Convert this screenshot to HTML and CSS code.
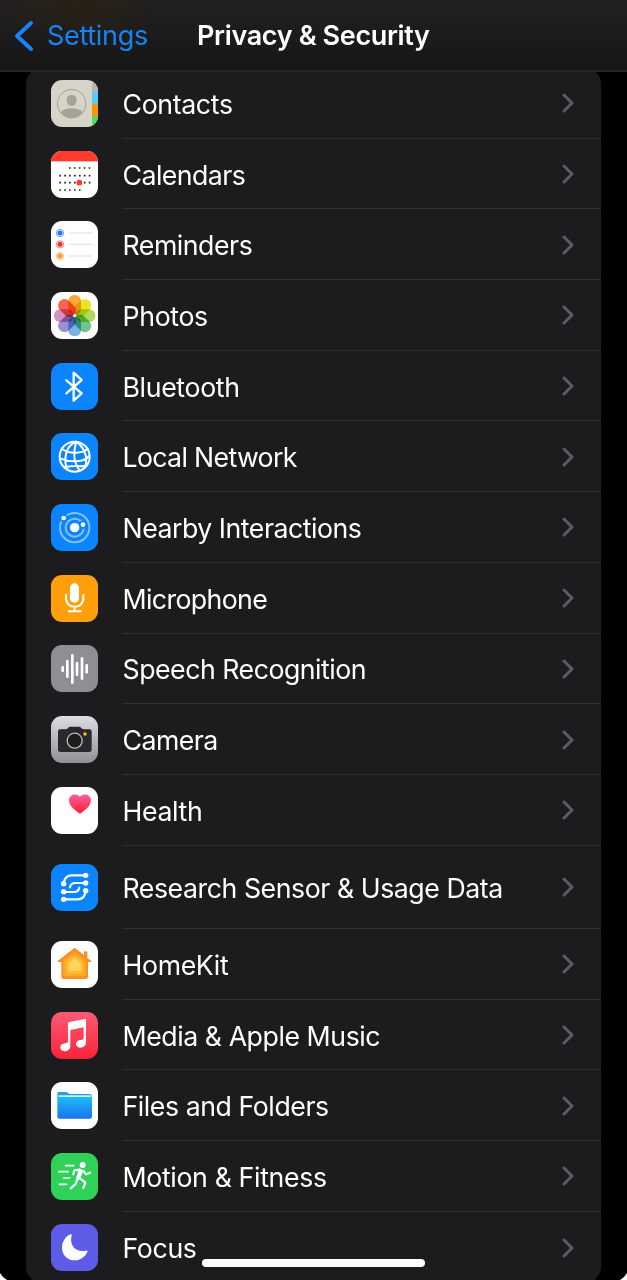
FILE: index.html
```html
<!DOCTYPE html>
<html lang="en">
<head>
<meta charset="utf-8">
<title>Privacy &amp; Security</title>
<link rel="stylesheet" href="styles.css">
</head>
<body>
<div class="screen">
<header class="nav">
  <a class="back"><svg class="back-icon" viewBox="0 0 20 32"><path d="M17 3 3 16 17 29"/></svg><span>Settings</span></a>
  <h1 class="title">Privacy &amp; Security</h1>
</header>
<main class="card">
  <div class="row">
    <svg class="icon" viewBox="0 0 141 141"><rect width="141" height="141" fill="#d6d3c8"/><path fill="#b9b5a9" d="M123 0h18v36h-18z"/><path fill="#5ac8fa" d="M123 36h18v36h-18z"/><path fill="#ff9500" d="M123 72h18v36h-18z"/><path fill="#4cd964" d="M123 108h18v33h-18z"/><circle cx="62" cy="71" r="43" fill="none" stroke="#a7a198" stroke-width="3"/><ellipse cx="62" cy="61" rx="15" ry="17" fill="#a7a198"/><path d="M29 97Q40 85 62 85T95 97Q82 114 62 114T29 97Z" fill="#a7a198"/></svg>
    <div class="cell"><span class="label w-contacts">Contacts</span><svg class="chev" viewBox="0 0 12 20"><path d="m2 2 8 8-8 8"/></svg></div>
  </div>
  <div class="row">
    <svg class="icon" viewBox="0 0 141 141"><rect width="141" height="141" fill="#fff"/><rect width="141" height="31" fill="#ff3b30"/><g stroke="#222" stroke-width="5" stroke-dasharray="5 9.7"><path d="M54 51h65M25 74h94M25 95h94M25 117h66"/></g><circle cx="85" cy="95" r="8.500" fill="#ff3b30"/></svg>
    <div class="cell"><span class="label w-calendars">Calendars</span><svg class="chev" viewBox="0 0 12 20"><path d="m2 2 8 8-8 8"/></svg></div>
  </div>
  <div class="row">
    <svg class="icon" viewBox="0 0 141 141"><rect width="141" height="141" fill="#fff"/><path stroke="#d9d9dc" stroke-width="2.500" d="M53 36h71M53 70h71M53 105h71"/><g fill="none" stroke-width="2"><circle cx="27" cy="36" r="11" stroke="#2e7bf6"/><circle cx="27" cy="70" r="11" stroke="#f33b35"/><circle cx="27" cy="105" r="11" stroke="#ff9f2d"/></g><circle cx="27" cy="36" r="7.500" fill="#2e6ff0"/><circle cx="27" cy="70" r="7.500" fill="#ed3030"/><circle cx="27" cy="105" r="7.500" fill="#fb9738"/></svg>
    <div class="cell"><span class="label w-reminders">Reminders</span><svg class="chev" viewBox="0 0 12 20"><path d="m2 2 8 8-8 8"/></svg></div>
  </div>
  <div class="row">
    <svg class="icon" viewBox="0 0 141 141"><rect width="141" height="141" fill="#fff"/><g class="petals" transform="translate(71 71)"><rect x="-19" y="-62" width="38" height="59" rx="18" fill="#fba53a"/><rect x="-19" y="-62" width="38" height="59" rx="18" fill="#ece526" transform="rotate(45)"/><rect x="-19" y="-62" width="38" height="59" rx="18" fill="#b0da58" transform="rotate(90)"/><rect x="-19" y="-62" width="38" height="59" rx="18" fill="#70c48f" transform="rotate(135)"/><rect x="-19" y="-62" width="38" height="59" rx="18" fill="#76b3e4" transform="rotate(180)"/><rect x="-19" y="-62" width="38" height="59" rx="18" fill="#9a91d0" transform="rotate(225)"/><rect x="-19" y="-62" width="38" height="59" rx="18" fill="#d293c1" transform="rotate(270)"/><rect x="-19" y="-62" width="38" height="59" rx="18" fill="#f66452" transform="rotate(315)"/></g><circle cx="71" cy="71" r="4" fill="#fff"/></svg>
    <div class="cell"><span class="label w-photos">Photos</span><svg class="chev" viewBox="0 0 12 20"><path d="m2 2 8 8-8 8"/></svg></div>
  </div>
  <div class="row">
    <svg class="icon" viewBox="0 0 141 141"><rect width="141" height="141" fill="#0a84ff"/><path class="line" stroke-width="7" d="m46 52 46 39-24 22V29l24 22-46 40"/></svg>
    <div class="cell"><span class="label w-bluetooth">Bluetooth</span><svg class="chev" viewBox="0 0 12 20"><path d="m2 2 8 8-8 8"/></svg></div>
  </div>
  <div class="row">
    <svg class="icon" viewBox="0 0 141 141"><rect width="141" height="141" fill="#0a84ff"/><g class="line" stroke-width="6"><circle cx="71" cy="71" r="45"/><path d="M76 26Q51 36 45 63T50 110M76 26Q66 60 72 83T88 112M76 26Q98 42 104 67T97 107M33 48Q53 61 77 59T110 47M27 76Q50 86 77 85T115 68M39 103Q65 98 80 99T105 99"/></g></svg>
    <div class="cell"><span class="label w-network">Local Network</span><svg class="chev" viewBox="0 0 12 20"><path d="m2 2 8 8-8 8"/></svg></div>
  </div>
  <div class="row">
    <svg class="icon" viewBox="0 0 141 141"><rect width="141" height="141" fill="#0a84ff"/><g fill="none" stroke="#84c1ff" stroke-width="6"><circle cx="71" cy="71" r="44"/><circle cx="71" cy="71" r="27"/></g><g fill="#fff" stroke="#0a84ff" stroke-width="5"><circle cx="38" cy="42" r="9.500"/><circle cx="96" cy="62" r="9.500"/></g><circle cx="71" cy="71" r="14" fill="#fff"/></svg>
    <div class="cell"><span class="label w-nearby">Nearby Interactions</span><svg class="chev" viewBox="0 0 12 20"><path d="m2 2 8 8-8 8"/></svg></div>
  </div>
  <div class="row">
    <svg class="icon" viewBox="0 0 141 141"><rect width="141" height="141" fill="#ff9f0a"/><rect x="57" y="25" width="27" height="58" rx="13.500" fill="#fff"/><path class="line" stroke-width="6" d="M45 60v10c0 34 52 34 52 0V60M71 96v12M53 109h36"/></svg>
    <div class="cell"><span class="label w-microphone">Microphone</span><svg class="chev" viewBox="0 0 12 20"><path d="m2 2 8 8-8 8"/></svg></div>
  </div>
  <div class="row">
    <svg class="icon" viewBox="0 0 141 141"><rect width="141" height="141" fill="#8e8e93"/><path class="line" stroke-width="8" d="M35 66v12M49 48v47M64 31v82M78 54v35M93 40v61M107 61v21"/></svg>
    <div class="cell"><span class="label w-speech">Speech Recognition</span><svg class="chev" viewBox="0 0 12 20"><path d="m2 2 8 8-8 8"/></svg></div>
  </div>
  <div class="row">
    <svg class="icon" viewBox="0 0 141 141"><defs><linearGradient id="camera" x2="0" y2="1"><stop stop-color="#dedde3"/><stop offset="1" stop-color="#8f8f95"/></linearGradient></defs><rect width="141" height="141" fill="url(#camera)"/><path fill="#29292c" d="M27 40h16q5 0 8-4t8-4h24q5 0 8 4t8 4h17q6 0 6 7v54q0 7-7 7H28q-7 0-7-7V47q0-7 6-7Z"/><circle cx="71" cy="74" r="22.500" fill="#1d1d1f" stroke="#b7b7bb" stroke-width="4"/><circle cx="102" cy="54" r="5" fill="#ffcc00"/></svg>
    <div class="cell"><span class="label w-camera">Camera</span><svg class="chev" viewBox="0 0 12 20"><path d="m2 2 8 8-8 8"/></svg></div>
  </div>
  <div class="row">
    <svg class="icon" viewBox="0 0 141 141"><defs><linearGradient id="heart" x2="0" y2="1"><stop stop-color="#ff5fa2"/><stop offset="1" stop-color="#fb202c"/></linearGradient></defs><rect width="141" height="141" fill="#fff"/><path fill="url(#heart)" d="M87 80C73 71 54 57 54 40 54 21 78 17 87 29 96 17 120 21 120 40 120 57 101 71 87 80Z"/></svg>
    <div class="cell"><span class="label w-health">Health</span><svg class="chev" viewBox="0 0 12 20"><path d="m2 2 8 8-8 8"/></svg></div>
  </div>
  <div class="row row-tall">
    <svg class="icon" viewBox="0 0 141 141"><rect width="141" height="141" fill="#0a84ff"/><path class="line" stroke-width="6.500" d="M38 59q3-24 22-25h44M104 57H73q-14 0-16 13M38 84h31q14 0 16-13M104 81q-3 24-22 25H38"/><g fill="#fff"><circle cx="104" cy="34" r="8"/><circle cx="104" cy="57" r="8"/><circle cx="104" cy="80" r="8"/><circle cx="38" cy="59" r="8"/><circle cx="38" cy="83" r="8"/><circle cx="38" cy="106" r="8"/></g></svg>
    <div class="cell"><span class="label w-research">Research Sensor &amp; Usage Data</span><svg class="chev" viewBox="0 0 12 20"><path d="m2 2 8 8-8 8"/></svg></div>
  </div>
  <div class="row">
    <svg class="icon" viewBox="0 0 141 141"><rect width="141" height="141" fill="#fff"/><path fill="#f8902a" d="m71 20 28 22V34q0-3 3-3h4q3 0 3 3v17l12 9q2 3-2 3h-8v44q0 7-6 7H37q-6 0-6-7V63h-9q-4 0-2-3Z"/><path fill="#ffa820" d="m71 32 34 27v42q0 5-5 5H42q-5 0-5-5V59Z"/><path fill="#ffbb38" d="m71 42 26 20v32q0 4-4 4H49q-4 0-4-4V62Z"/><path fill="#ffd45c" d="m71 51 18 14v21q0 3-3 3H56q-3 0-3-3V65Z"/></svg>
    <div class="cell"><span class="label w-homekit">HomeKit</span><svg class="chev" viewBox="0 0 12 20"><path d="m2 2 8 8-8 8"/></svg></div>
  </div>
  <div class="row">
    <svg class="icon" viewBox="0 0 141 141"><defs><linearGradient id="music" x2="0" y2="1"><stop stop-color="#fb5c74"/><stop offset="1" stop-color="#fa233b"/></linearGradient></defs><rect width="141" height="141" fill="url(#music)"/><path fill="#fff" d="M51 35q0-4 5-5l45-9q4-1 4 3v67c0 20-28 21-30 6 0-11 10-13 18-14 4-1 5-3 5-6V46l-40 8v48c0 19-29 21-30 5 0-10 9-13 17-14 5-1 6-3 6-7Z"/></svg>
    <div class="cell"><span class="label w-media">Media &amp; Apple Music</span><svg class="chev" viewBox="0 0 12 20"><path d="m2 2 8 8-8 8"/></svg></div>
  </div>
  <div class="row">
    <svg class="icon" viewBox="0 0 141 141"><defs><linearGradient id="folder" x2="0" y2="1"><stop stop-color="#1ebcf5"/><stop offset="1" stop-color="#1a73f0"/></linearGradient></defs><rect width="141" height="141" fill="#fff"/><path fill="#1ba2e9" d="M19 35q0-5 5-5h20q4 0 7 3t7 3h59q5 0 5 5v10H19Z"/><path fill="#c8f0ff" d="M22 40h98v5H22z"/><path fill="url(#folder)" d="M19 45h104v59q0 6-6 6H25q-6 0-6-6Z"/></svg>
    <div class="cell"><span class="label w-files">Files and Folders</span><svg class="chev" viewBox="0 0 12 20"><path d="m2 2 8 8-8 8"/></svg></div>
  </div>
  <div class="row">
    <svg class="icon" viewBox="0 0 141 141"><rect width="141" height="141" fill="#30d158"/><circle cx="95" cy="36" r="9" fill="#fff"/><path class="line" stroke-width="5" d="M44 38h24M24 56h27M38 75h18M25 94h22"/><path class="line" stroke-width="6.500" d="M67 64 70 52 86 50M97 54l8 10 12-5M88 77l15 12-6 16M79 79l-5 14-15 13"/><path class="line" stroke-width="13" d="M89 55 82 74"/></svg>
    <div class="cell"><span class="label w-motion">Motion &amp; Fitness</span><svg class="chev" viewBox="0 0 12 20"><path d="m2 2 8 8-8 8"/></svg></div>
  </div>
  <div class="row">
    <svg class="icon" viewBox="0 0 141 141"><rect width="141" height="141" fill="#5e5ce6"/><path fill="#fff" d="M58 31q5-2 4 3c-8 31 12 53 44 46q5-1 3 4C102 99 88 109 71 109 49 109 33 93 33 71 33 54 43 38 58 31Z"/></svg>
    <div class="cell"><span class="label w-focus">Focus</span><svg class="chev" viewBox="0 0 12 20"><path d="m2 2 8 8-8 8"/></svg></div>
  </div>
</main>
<div class="home-bar"></div>
<i class="corner corner-left"></i><i class="corner corner-right"></i>
</div>
</body>
</html>
```
FILE: styles.css
```css
* { box-sizing: border-box; }
body { margin: 0; background: #000; }
.screen {
  position: relative;
  width: 627px;
  height: 1280px;
  overflow: hidden;
  background: #000;
  color: #fff;
  font-family: Inter, "Liberation Sans", sans-serif;
}
.nav {
  position: relative;
  z-index: 1;
  display: grid;
  grid-template-columns: 197px 1fr;
  align-items: center;
  height: 72px;
  padding-top: 1px;
  border-bottom: 2px solid #272729;
  background: radial-gradient(ellipse 95px 50px at 75px 0, #292015, transparent), linear-gradient(#212122, #161617);
}
.back { display: flex; align-items: center; gap: 13px; padding-left: 14px; color: #1683f7; font-size: 27px; }
.back-icon { width: 20px; height: 32px; fill: none; stroke: #1683f7; stroke-width: 4; stroke-linecap: round; stroke-linejoin: round; }
.back span { letter-spacing: -0.3px; }
.title { margin: 0; font-size: 27px; font-weight: 600; letter-spacing: -0.36px; white-space: nowrap; }
.card {
  width: 575px;
  margin: -4px 0 0 26px;
  border-radius: 16px;
  background: #1c1c1e;
  overflow: hidden;
}
.row { display: flex; align-items: center; gap: 24px; height: 70.7px; padding-left: 25px; }
.row-tall { height: 83.5px; }
.icon { flex: none; width: 47px; height: 47px; border-radius: 11px; }
.line { fill: none; stroke: #fff; stroke-linecap: round; stroke-linejoin: round; }
.petals rect { mix-blend-mode: multiply; }
.cell {
  flex: 1;
  display: flex;
  align-items: center;
  justify-content: space-between;
  height: 100%;
  padding-right: 27px;
  border-bottom: 1px solid #303032;
}
.row:last-child .cell { border-bottom: 0; }
.label { padding: 2px 0 0 0.5px; font-size: 26.7px; line-height: 34px; letter-spacing: -0.35px; white-space: nowrap; }
.w-calendars { letter-spacing: -0.55px; }
.w-reminders { letter-spacing: -0.47px; }
.w-network { letter-spacing: -0.66px; }
.w-nearby { letter-spacing: -0.48px; }
.w-microphone { letter-spacing: -0.62px; }
.w-speech { letter-spacing: -0.48px; }
.w-camera { letter-spacing: -0.55px; }
.w-research, .w-files, .w-media { letter-spacing: -0.44px; }
.chev { width: 12px; height: 20px; margin-top: 1px; fill: none; stroke: #5c5c60; stroke-width: 3; stroke-linecap: round; stroke-linejoin: round; }
.home-bar { position: absolute; left: 202px; top: 1259px; width: 223px; height: 8px; border-radius: 4px; background: #fff; }
.corner { position: absolute; bottom: 0; width: 7px; height: 7px; background: #fff; }
.corner-left { left: 0; clip-path: polygon(0 0, 3px 4px, 7px 7px, 0 7px); }
.corner-right { right: 0; clip-path: polygon(7px 0, 4px 4px, 0 7px, 7px 7px); }
```
